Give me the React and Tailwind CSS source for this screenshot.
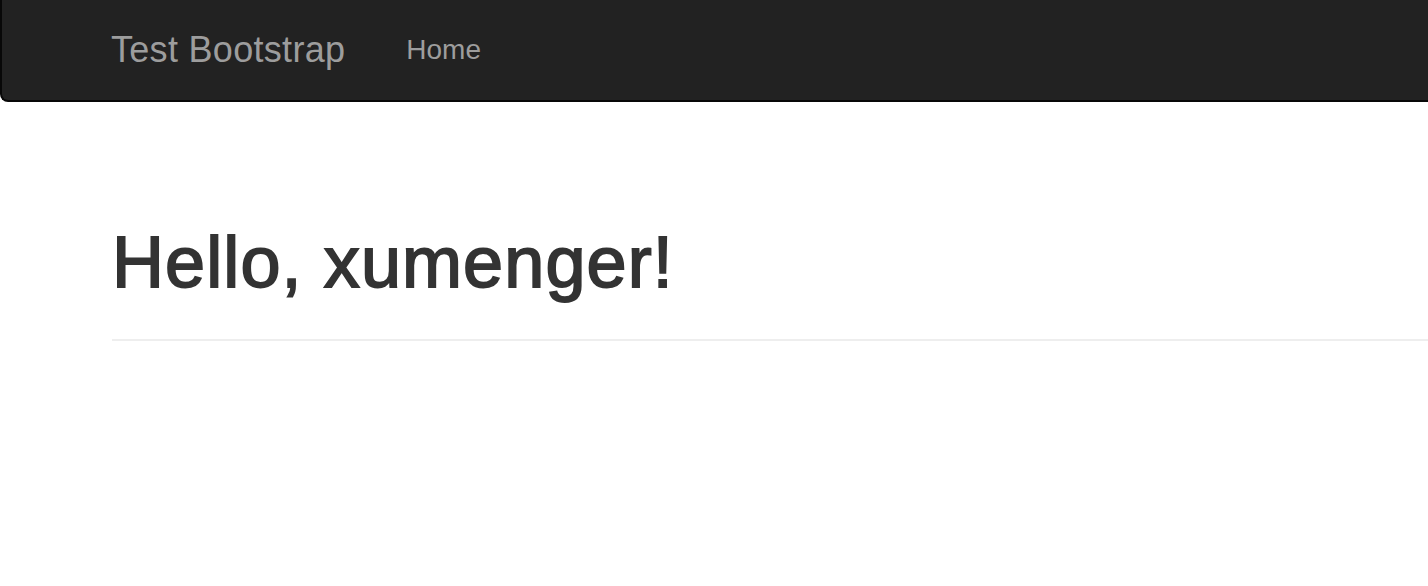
import React from "react";

const FONT = { fontFamily: '"Liberation Sans", Arial, sans-serif' };

const Navbar = () => (
    <nav className="h-[102px] w-full bg-[#222] border-l-2 border-b-2 border-[#080808] rounded-bl-[8px] flex items-center pl-[109px]">
        <a href="#" className="text-[36px] leading-none text-[#9d9d9d] tracking-[0.3px]">
            Test Bootstrap
        </a>
        <a href="#" className="ml-[61px] text-[28px] leading-none text-[#9d9d9d]">
            Home
        </a>
    </nav>
);

export default function App() {
    return (
        <div className="min-h-[586px] w-full bg-white overflow-hidden" style={FONT}>
            <Navbar />
            <main className="pl-[112px]">
                {/* Helvetica Neue 500 approximated with a light stroke */}
                <h1 className="pt-[124px] text-[72px] leading-none text-[#333] tracking-[1.1px] [-webkit-text-stroke:1.8px_#333]">
                    Hello, xumenger!
                </h1>
                <div className="mt-[41px] h-[2px] bg-[#eee]" />
            </main>
        </div>
    );
}
